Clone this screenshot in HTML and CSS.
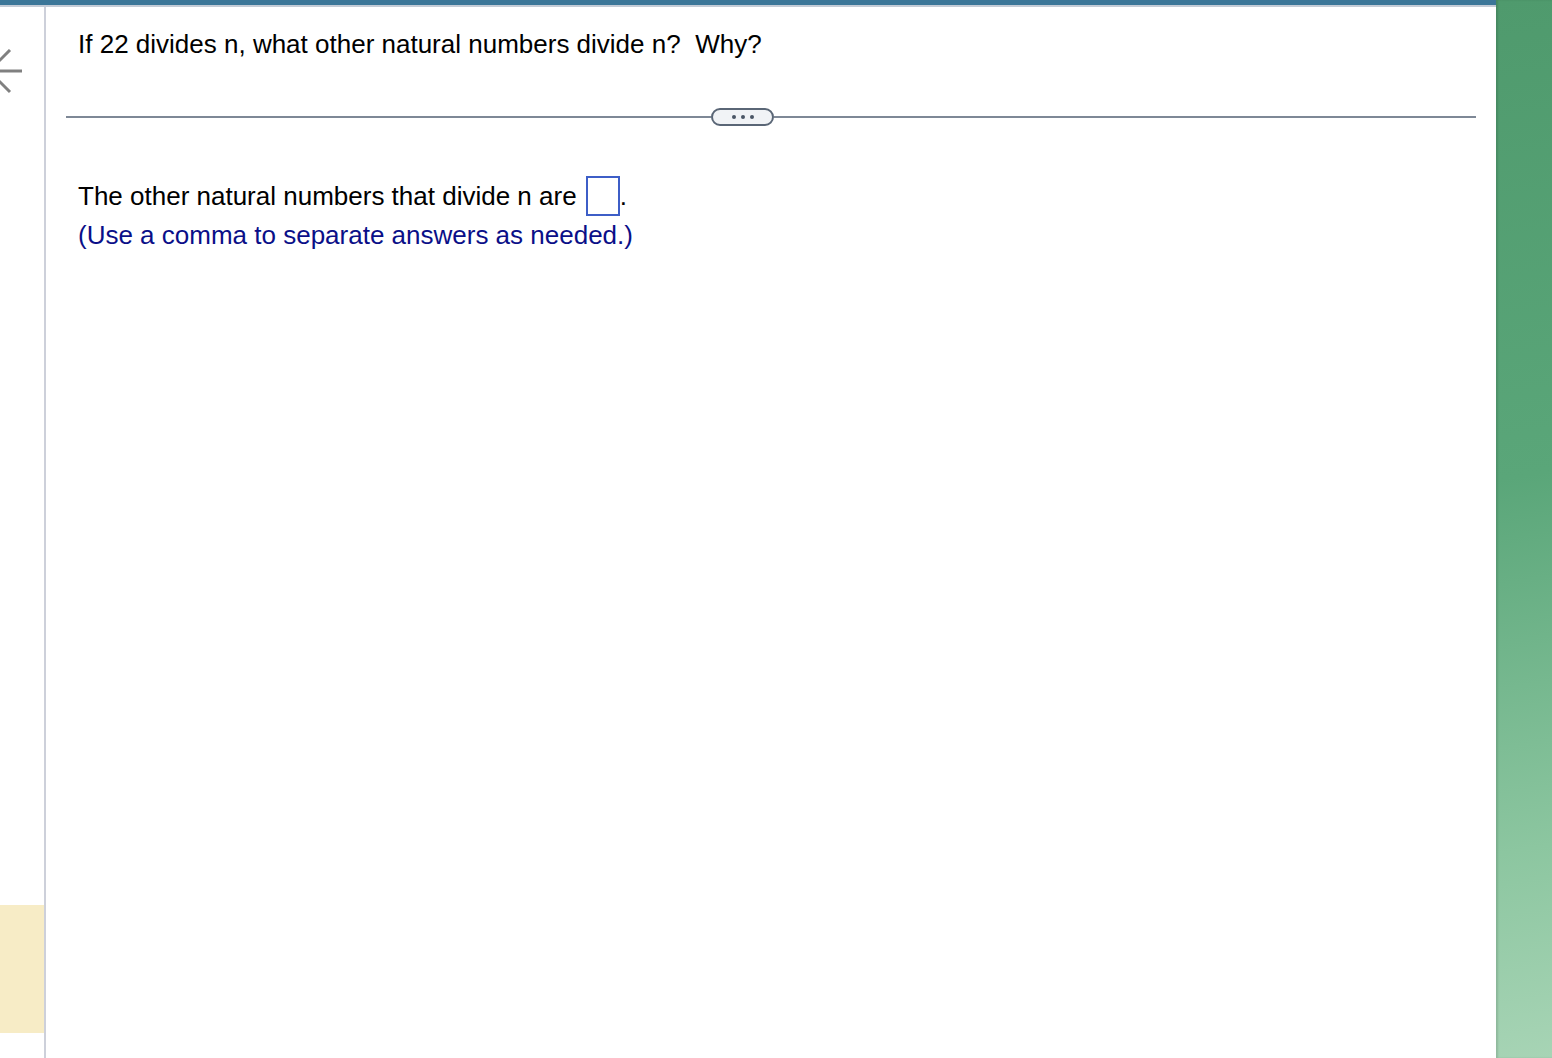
FILE: index.html
```html
<!DOCTYPE html>
<html>
<head>
<meta charset="utf-8">
<link rel="stylesheet" href="styles.css">
</head>
<body>
<div class="app">
  <div class="main">
    <div class="topbar"></div>
    <div class="body">
      <div class="leftcol">
        <div class="back">
          <svg width="24" height="50" viewBox="0 0 24 50">
            <path d="M0 22 L22 22" stroke="#808080" stroke-width="3" fill="none"/>
            <path d="M10 1 L-11 22 L10 43" stroke="#808080" stroke-width="3" fill="none"/>
          </svg>
        </div>
        <div class="leftspacer"></div>
        <div class="note"></div>
      </div>
      <div class="content">
        <p class="question">If 22 divides n, what other natural numbers divide n?&nbsp; Why?</p>
        <div class="sep">
          <div class="rule rule-left"></div>
          <button class="more"><span class="dot"></span><span class="dot"></span><span class="dot"></span></button>
          <div class="rule rule-right"></div>
        </div>
        <div class="answer">
          <p class="line">The other natural numbers that divide n are <span class="box"></span>.</p>
          <p class="hint">(Use a comma to separate answers as needed.)</p>
        </div>
      </div>
    </div>
  </div>
  <div class="side"></div>
</div>
</body>
</html>
```
FILE: styles.css
```css
html, body {
  margin: 0;
  padding: 0;
  height: 100%;
}
body {
  font-family: "Liberation Sans", Arial, sans-serif;
  background: #fff;
  overflow: hidden;
}
.app {
  display: flex;
  height: 1058px;
}
.main {
  width: 1496px;
  display: flex;
  flex-direction: column;
}
.topbar {
  height: 5px;
  background: #3b7698;
  border-bottom: 2px solid #c3cbd6;
}
.body {
  flex: 1;
  display: flex;
}
.leftcol {
  width: 44px;
  border-right: 2px solid #cdd0da;
  display: flex;
  flex-direction: column;
}
.back {
  margin-top: 42px;
  height: 50px;
  overflow: hidden;
}
.back svg { display: block; }
.leftspacer { flex: 1; }
.note {
  height: 128px;
  background: #f7ecc6;
  margin-bottom: 25px;
}
.content {
  flex: 1;
  padding: 0 20px 0 20px;
}
.question {
  margin: 22px 0 0 12px;
  font-size: 26px;
  line-height: 30px;
  color: #000;
}
.sep {
  display: flex;
  align-items: center;
  margin-top: 49px;
}
.rule {
  height: 2px;
  background: #7e8896;
}
.rule-left { width: 645px; }
.rule-right { flex: 1; }
.more {
  width: 63px;
  height: 18px;
  border: 2px solid #5a6676;
  border-radius: 10px;
  background: #f1f3f6;
  display: flex;
  align-items: center;
  justify-content: center;
  gap: 5px;
  padding: 0;
  margin: 0;
  flex: none;
}
.dot {
  width: 4px;
  height: 4px;
  border-radius: 50%;
  background: #4a5565;
}
.answer {
  margin: 50px 0 0 12px;
}
.line {
  margin: 0;
  font-size: 26px;
  line-height: 40px;
  color: #000;
}
.box {
  display: inline-block;
  width: 30px;
  height: 36px;
  border: 2px solid #3d5ec7;
  vertical-align: -11px;
  margin-left: 2px;
}
.hint {
  margin: 4px 0 0 0;
  font-size: 26px;
  line-height: 30px;
  color: #0a0f88;
}
.side {
  flex: 1;
  background: linear-gradient(170deg, #4f9a6d 0%, #5aa679 45%, #8cc6a0 80%, #a7d4b5 100%);
  box-shadow: inset 2px 0 2px rgba(0,0,0,0.12);
}
```
